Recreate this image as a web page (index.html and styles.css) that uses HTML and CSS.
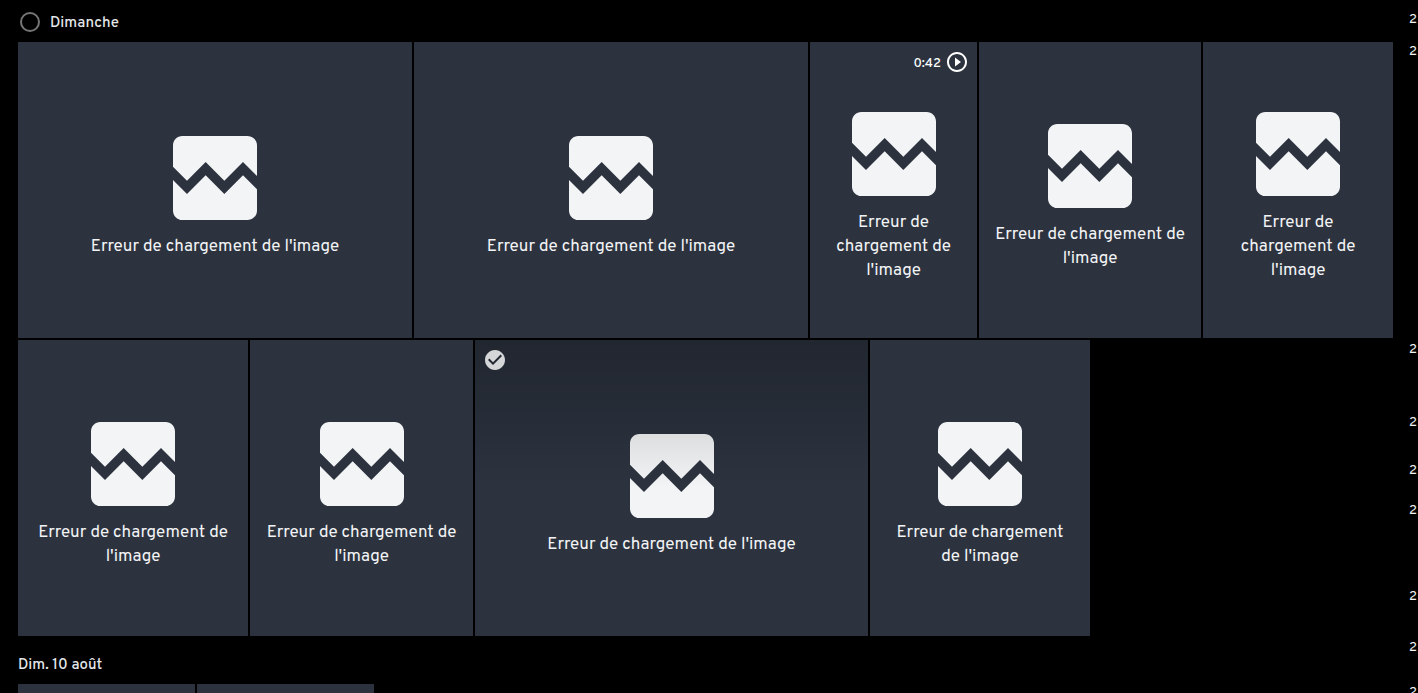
FILE: index.html
```html
<!DOCTYPE html>
<html lang="fr">
<head>
    <meta charset="UTF-8">
    <meta name="viewport" content="width=device-width, initial-scale=1.0">
    <title>Photos</title>
    <link rel="stylesheet" href="styles.css">
</head>
<body>
    <svg class="sprite" aria-hidden="true">
        <symbol id="broken" viewBox="0 0 24 24">
            <path d="M21 5v6.59l-3-3.01-4 4.01-4-4-4 4-3-3.01V5c0-1.1.9-2 2-2h14c1.1 0 2 .9 2 2zm-3 6.42l3 3.01V19c0 1.1-.9 2-2 2H5c-1.1 0-2-.9-2-2v-6.58l3 2.99 4-4 4 4 4-3.99z"/>
        </symbol>
        <symbol id="play" viewBox="2 2 20 20">
            <path d="M12 2C6.48 2 2 6.48 2 12s4.48 10 10 10 10-4.48 10-10S17.52 2 12 2zm0 18c-4.41 0-8-3.59-8-8s3.59-8 8-8 8 3.59 8 8-3.59 8-8 8zM10 7.5v9l6-4.5z"/>
        </symbol>
        <symbol id="check" viewBox="2 2 20 20">
            <path d="M12 2C6.48 2 2 6.48 2 12s4.48 10 10 10 10-4.48 10-10S17.52 2 12 2zm-2 15l-5-5 1.41-1.41L10 14.17l7.59-7.59L19 8l-9 9z"/>
        </symbol>
    </svg>

    <main class="timeline">
        <section class="day">
            <header class="day-header">
                <button class="select-day" type="button" aria-label="Sélectionner dimanche"></button>
                <h2>Dimanche</h2>
            </header>
            <div class="row">
                <div class="tile" style="flex-grow: 394">
                    <svg class="broken"><use href="#broken"/></svg>
                    <p>Erreur de chargement de l'image</p>
                </div>
                <div class="tile" style="flex-grow: 394">
                    <svg class="broken"><use href="#broken"/></svg>
                    <p>Erreur de chargement de l'image</p>
                </div>
                <div class="tile" style="flex-grow: 167">
                    <div class="duration">
                        <span>0:42</span>
                        <svg><use href="#play"/></svg>
                    </div>
                    <svg class="broken"><use href="#broken"/></svg>
                    <p>Erreur de chargement de l'image</p>
                </div>
                <div class="tile" style="flex-grow: 222">
                    <svg class="broken"><use href="#broken"/></svg>
                    <p>Erreur de chargement de l'image</p>
                </div>
                <div class="tile" style="flex-grow: 190">
                    <svg class="broken"><use href="#broken"/></svg>
                    <p>Erreur de chargement de l'image</p>
                </div>
            </div>
            <div class="row">
                <div class="tile" style="flex-grow: 230">
                    <svg class="broken"><use href="#broken"/></svg>
                    <p>Erreur de chargement de l'image</p>
                </div>
                <div class="tile" style="flex-grow: 223">
                    <svg class="broken"><use href="#broken"/></svg>
                    <p>Erreur de chargement de l'image</p>
                </div>
                <div class="tile hovered" style="flex-grow: 393">
                    <button class="select-photo" type="button" aria-label="Sélectionner la photo">
                        <svg><use href="#check"/></svg>
                    </button>
                    <svg class="broken"><use href="#broken"/></svg>
                    <p>Erreur de chargement de l'image</p>
                </div>
                <div class="tile" style="flex-grow: 220">
                    <svg class="broken"><use href="#broken"/></svg>
                    <p>Erreur de chargement de l'image</p>
                </div>
                <div class="rest" style="flex-grow: 301"></div>
            </div>
        </section>

        <section class="day">
            <header class="day-header">
                <h2>Dim. 10 août</h2>
            </header>
            <div class="row">
                <div class="tile" style="flex-grow: 177"></div>
                <div class="tile" style="flex-grow: 177"></div>
                <div class="rest" style="flex-grow: 1017"></div>
            </div>
        </section>
    </main>

    <!-- each height is the length of that period on the scrollbar -->
    <ol class="scrubber">
        <li style="height: 32px">2</li>
        <li style="height: 298px">2</li>
        <li style="height: 73px">2</li>
        <li style="height: 48px">2</li>
        <li style="height: 40px">2</li>
        <li style="height: 86px">2</li>
        <li style="height: 51px">2</li>
        <li style="height: 45px">2</li>
        <li style="height: 40px">2</li>
    </ol>
</body>
</html>
```

FILE: styles.css
```css
* {
    box-sizing: border-box;
}
body {
    display: flex;
    height: 100vh;
    margin: 0;
    overflow: hidden;
    background: #000;
    color: #f3f4f6;
    font-family: Overpass, Roboto, "Noto Sans", sans-serif;
}
h2, p, ol {
    margin: 0;
    padding: 0;
}
button {
    padding: 0;
    border: none;
    background: none;
    cursor: pointer;
}
svg {
    display: block;
    fill: currentColor;
}
.sprite {
    display: none;
}
.timeline {
    flex: 1;
    min-width: 0;
    padding-left: 18px;
}
.day {
    display: flex;
    flex-direction: column;
    gap: 2px;
    margin-bottom: 6px;
}
.day-header {
    display: flex;
    align-items: center;
    gap: 10px;
    height: 40px;
    padding-top: 4px;
}
.day-header h2 {
    padding-top: 4px;
    font-size: 15px;
    font-weight: 500;
    line-height: 20px;
    color: #e5e7eb;
}
.select-day {
    width: 20px;
    height: 20px;
    margin-left: 2px;
    border: 2px solid #757575;
    border-radius: 50%;
}
.row {
    display: flex;
    gap: 2px;
    height: 296px;
}
.tile {
    position: relative;
    display: flex;
    flex-direction: column;
    flex-basis: 0;
    align-items: center;
    justify-content: center;
    min-width: 0;
    background: #2c333f;
    text-align: center;
}
.rest {
    flex-basis: 0;
}
.tile p {
    padding: 1px 16px 0;
    font-size: 17px;
    line-height: 24px;
}
.broken {
    flex: none;
    width: 112px;
    height: 112px;
}
.duration {
    position: absolute;
    top: 10px;
    right: 10px;
    display: flex;
    align-items: center;
    gap: 6px;
    color: #fff;
    font-size: 13px;
    font-weight: 500;
}
.duration span {
    padding-top: 4px;
}
.duration svg,
.select-photo svg {
    width: 20px;
    height: 20px;
}
.hovered::before {
    content: "";
    position: absolute;
    inset: 0;
    background: linear-gradient(rgba(0, 0, 0, 0.25), transparent 50%);
}
.select-photo {
    position: absolute;
    top: 10px;
    left: 10px;
    color: #d5d6d8;
}
.scrubber {
    width: 25px;
    padding: 13px 1px 0 0;
    overflow: hidden;
    list-style: none;
    text-align: right;
    font-size: 13px;
    line-height: 14px;
}
```
